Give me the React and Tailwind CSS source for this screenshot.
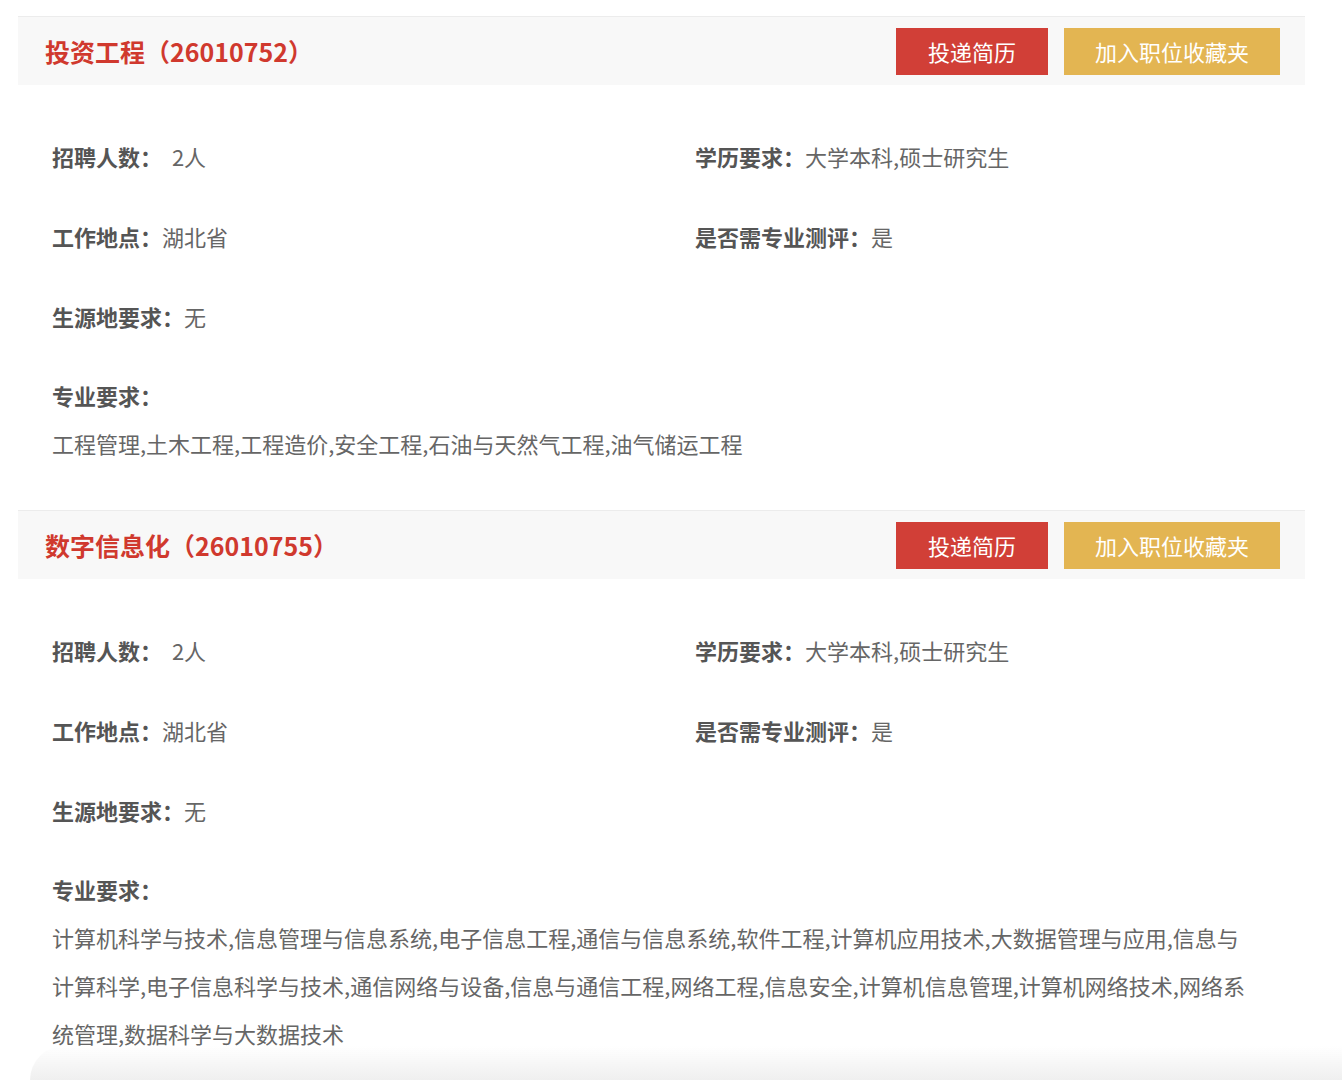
import React from "react";

const jobs = [
  {
    id: "26010752",
    name: "投资工程",
    count: "2人",
    education: "大学本科,硕士研究生",
    location: "湖北省",
    assessment: "是",
    origin: "无",
    majors:
      "工程管理,土木工程,工程造价,安全工程,石油与天然气工程,油气储运工程",
  },
  {
    id: "26010755",
    name: "数字信息化",
    count: "2人",
    education: "大学本科,硕士研究生",
    location: "湖北省",
    assessment: "是",
    origin: "无",
    majors:
      "计算机科学与技术,信息管理与信息系统,电子信息工程,通信与信息系统,软件工程,计算机应用技术,大数据管理与应用,信息与计算科学,电子信息科学与技术,通信网络与设备,信息与通信工程,网络工程,信息安全,计算机信息管理,计算机网络技术,网络系统管理,数据科学与大数据技术",
  },
];

const Field = ({ label, children }) => (
  <div className="leading-[30px] whitespace-nowrap">
    <span className="font-bold text-[#555]">{label}：</span>
    <span className="text-[#666]">{children}</span>
  </div>
);

const JobCard = ({ job }) => {
  return (
    <div className="w-[1287px]">
      <div className="flex h-[69px] items-center justify-between border-t border-[#ececec] bg-[#f8f8f8] pl-[27px] pr-[25px]">
        <h2 className="pt-px text-[25px] font-bold text-[#d0392e]">
          {job.name}（{job.id}）
        </h2>
        <div className="flex gap-4">
          <button className="h-[47px] w-[152px] bg-[#d13f37] text-[22px] text-white">
            投递简历
          </button>
          <button className="h-[47px] w-[216px] bg-[#e3b552] text-[22px] text-white">
            加入职位收藏夹
          </button>
        </div>
      </div>

      <div className="pl-[34px] pr-[34px] pt-[56px] pb-[43px] text-[22px]">
        <div className="grid grid-cols-[643px_1fr] gap-y-[50px]">
          <Field label="招聘人数">&nbsp;&nbsp;{job.count}</Field>
          <Field label="学历要求">{job.education}</Field>
          <Field label="工作地点">{job.location}</Field>
          <Field label="是否需专业测评">{job.assessment}</Field>
          <Field label="生源地要求">{job.origin}</Field>
        </div>
        <div className="mt-10 leading-[48px]">
          <div className="font-bold text-[#555]">专业要求：</div>
          <div className="max-w-[1200px] text-[#666]">{job.majors}</div>
        </div>
      </div>
    </div>
  );
};

export default function App() {
  return (
    <div className="relative min-h-screen bg-white pl-[18px] pt-4 font-['PingFang_SC','Noto_Sans_CJK_SC',sans-serif]">
      {jobs.map((job) => (
        <JobCard key={job.id} job={job} />
      ))}
      <div className="pointer-events-none fixed bottom-0 left-[30px] right-0 h-[34px] rounded-tl-[60px] bg-linear-to-b from-white/0 to-[#efefef]" />
    </div>
  );
}
